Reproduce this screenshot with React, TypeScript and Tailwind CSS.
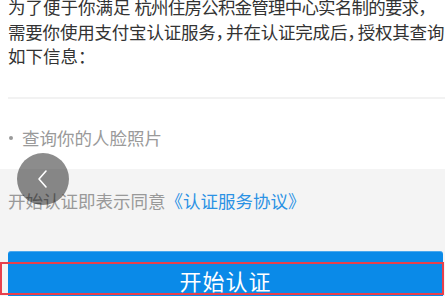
import * as React from "react";

const font = { fontFamily: '"Noto Sans CJK SC", "Noto Sans", sans-serif' };

// narrow comma, as the reference's font sets punctuation half-width
const Comma = () => <span className="tracking-[-7px]">，</span>;

export default function App() {
  return (
    <div
      className="relative w-[445px] h-[296px] overflow-hidden bg-[#f4f4f4]"
      style={font}
    >
      <div className="flow-root bg-white h-[169px] pl-2">
        <div className="mt-[-5px] text-[17.5px] leading-[24.5px] text-[#333333] whitespace-nowrap">
          <p>
            为了便于你满足{" "}
            <span className="tracking-[-0.8px]">杭州住房公积金管理中心实名制的要求</span>
            <Comma />
          </p>
          <p className="tracking-[-0.2px]">
            需要你使用支付宝认证服务<Comma />并在认证完成后<Comma />授权其查询
          </p>
          <p>如下信息：</p>
        </div>
        <div className="mt-[28px] h-[2px] bg-[#f2f2f2]" />
        <div className="mt-[27px] flex items-center gap-[9px] text-[17.5px] leading-[24px] text-[#9a9a9a]">
          <span className="w-[4px] h-[4px] rounded-full bg-[#9a9a9a] ml-[1px]" />
          <span>查询你的人脸照片</span>
        </div>
      </div>

      <p className="pl-2 pt-[20px] text-[17.5px] leading-[24px] text-[#999999] whitespace-nowrap">
        开始认证即表示同意<span className="text-[#2b92e4]">《认证服务协议》</span>
      </p>

      <div className="mt-[38px] ml-2 mr-[2px] h-[58px] rounded-[3px] bg-[#0a8ae8] border-t border-[#4aa8ee] flex items-center justify-center">
        <span className="text-[22px] text-white tracking-[1px]">开始认证</span>
      </div>

      {/* floating back button */}
      <div className="absolute left-[17px] top-[153px] w-[52px] h-[52px] rounded-full bg-black/45 flex items-center justify-center">
        <svg width="14" height="20" viewBox="0 0 14 20" fill="none">
          <polyline
            points="10,2 3,10 10,18"
            stroke="white"
            strokeWidth="1.6"
            strokeLinecap="round"
            strokeLinejoin="round"
          />
        </svg>
      </div>

      {/* red annotation box */}
      <div className="absolute left-0 top-[262px] w-[444px] h-[33px] border-2 border-[#e8404c]" />
    </div>
  );
}
